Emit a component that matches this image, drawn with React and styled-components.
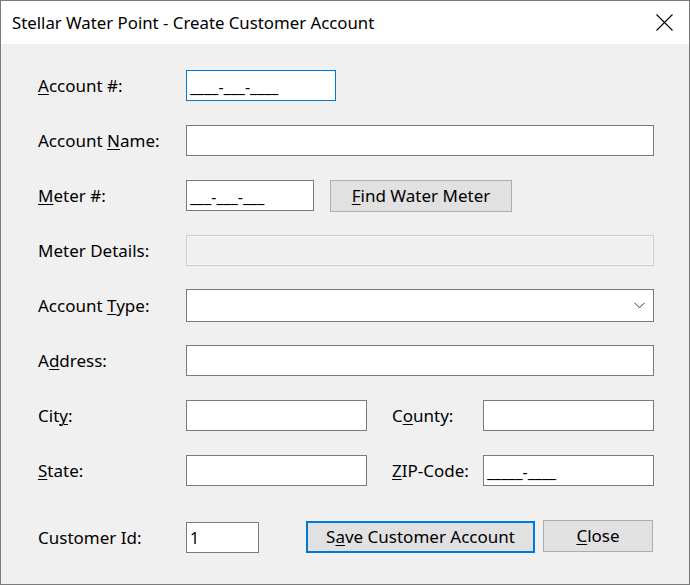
import React from "react";
import styled, { createGlobalStyle } from "styled-components";

const Global = createGlobalStyle`
  html, body { margin: 0; padding: 0; background: #fff; }
  * { box-sizing: border-box; }
`;

const FONT = `"Segoe UI", "Noto Sans", "Open Sans", sans-serif`;

const Window = styled.div`
  width: 690px;
  height: 585px;
  border: 1px solid #7a7a7a;
  display: flex;
  flex-direction: column;
  font-family: ${FONT};
  color: #000;
  background: #f0f0f0;
`;

const TitleBar = styled.div`
  height: 43px;
  background: #fff;
  display: flex;
  align-items: center;
  justify-content: space-between;
  padding: 0 16px 0 11px;
  flex-shrink: 0;
`;

const Title = styled.div`
  font-size: 16.8px;
`;

const CloseX = styled.svg`
  width: 17px;
  height: 17px;
  display: block;
`;

const Body = styled.div`
  flex: 1;
  display: flex;
  flex-direction: column;
  padding: 25px 35px 0 37px;
  font-size: 17px;
`;

const Row = styled.div`
  display: flex;
  align-items: center;
  height: 33px;
  margin-bottom: ${(p) => p.$gap ?? 22}px;
`;

const Label = styled.label`
  width: ${(p) => p.$w ?? 148}px;
  flex-shrink: 0;
  white-space: nowrap;
`;

const U = styled.u`
  text-decoration: underline;
  text-underline-offset: 2px;
  text-decoration-thickness: 1px;
`;

const Input = styled.div`
  width: ${(p) => p.$w}px;
  height: ${(p) => p.$h ?? 31}px;
  background: ${(p) => (p.$disabled ? "#f0f0f0" : "#fff")};
  border: 1px solid
    ${(p) => (p.$focus ? "#0078d7" : p.$disabled ? "#cccccc" : "#7a7a7a")};
  box-shadow: ${(p) => (p.$disabled ? "inset 0 0 0 1px #f7f7f7" : "none")};
  display: flex;
  align-items: center;
  padding: 0 3px;
  font-size: 16px;
  white-space: nowrap;
  flex-shrink: 0;
  margin-left: ${(p) => p.$ml ?? 0}px;
  overflow: hidden;
`;

const Mask = styled.span`
  padding-top: 2px;
`;

const Combo = styled(Input)`
  justify-content: flex-end;
  padding-right: 8px;
`;

const Chevron = styled.svg`
  width: 11px;
  height: 7px;
  display: block;
`;

const Button = styled.button`
  width: ${(p) => p.$w}px;
  height: ${(p) => p.$h ?? 32}px;
  margin-left: ${(p) => p.$ml ?? 0}px;
  background: #e1e1e1;
  border: ${(p) => (p.$default ? "2px solid #0078d7" : "1px solid #adadad")};
  font-family: ${FONT};
  font-size: 17px;
  color: #000;
  padding: 0;
  flex-shrink: 0;
  align-self: ${(p) => p.$align ?? "center"};
  margin-top: ${(p) => p.$mt ?? 0}px;
`;

const Spacer = styled.div`
  width: ${(p) => p.$w}px;
  flex-shrink: 0;
`;

export default function App() {
  return (
    <>
      <Global />
      <Window>
        <TitleBar>
          <Title>Stellar Water Point - Create Customer Account</Title>
          <CloseX viewBox="0 0 17 17">
            <path d="M0.5 0.5 L16.5 16.5 M16.5 0.5 L0.5 16.5" stroke="#000" strokeWidth="1.1" fill="none" />
          </CloseX>
        </TitleBar>
        <Body>
          <Row>
            <Label><U>A</U>ccount #:</Label>
            <Input $w={150} $focus><Mask>____-___-____</Mask></Input>
          </Row>
          <Row>
            <Label>Account <U>N</U>ame:</Label>
            <Input $w={468} />
          </Row>
          <Row>
            <Label><U>M</U>eter #:</Label>
            <Input $w={128}><Mask>___-___-___</Mask></Input>
            <Button $w={182} $ml={16}><U>F</U>ind Water Meter</Button>
          </Row>
          <Row>
            <Label>Meter Details:</Label>
            <Input $w={468} $disabled />
          </Row>
          <Row>
            <Label>Account <U>T</U>ype:</Label>
            <Combo $w={468} $h={33}>
              <Chevron viewBox="0 0 11 7">
                <path d="M0.5 0.8 L5.5 5.8 L10.5 0.8" stroke="#333" strokeWidth="1" fill="none" />
              </Chevron>
            </Combo>
          </Row>
          <Row>
            <Label>A<U>d</U>dress:</Label>
            <Input $w={468} />
          </Row>
          <Row>
            <Label>Cit<U>y</U>:</Label>
            <Input $w={181} />
            <Spacer $w={25} />
            <Label $w={91}>C<U>o</U>unty:</Label>
            <Input $w={171} />
          </Row>
          <Row $gap={34}>
            <Label><U>S</U>tate:</Label>
            <Input $w={181} />
            <Spacer $w={25} />
            <Label $w={91}><U>Z</U>IP-Code:</Label>
            <Input $w={171}><Mask>_____-____</Mask></Input>
          </Row>
          <Row>
            <Label>Customer Id:</Label>
            <Input $w={73}>1</Input>
            <Button $w={229} $ml={47} $default $mt={-2}>S<U>a</U>ve Customer Account</Button>
            <Button $w={110} $ml={8} $mt={-4}><U>C</U>lose</Button>
          </Row>
        </Body>
      </Window>
    </>
  );
}
